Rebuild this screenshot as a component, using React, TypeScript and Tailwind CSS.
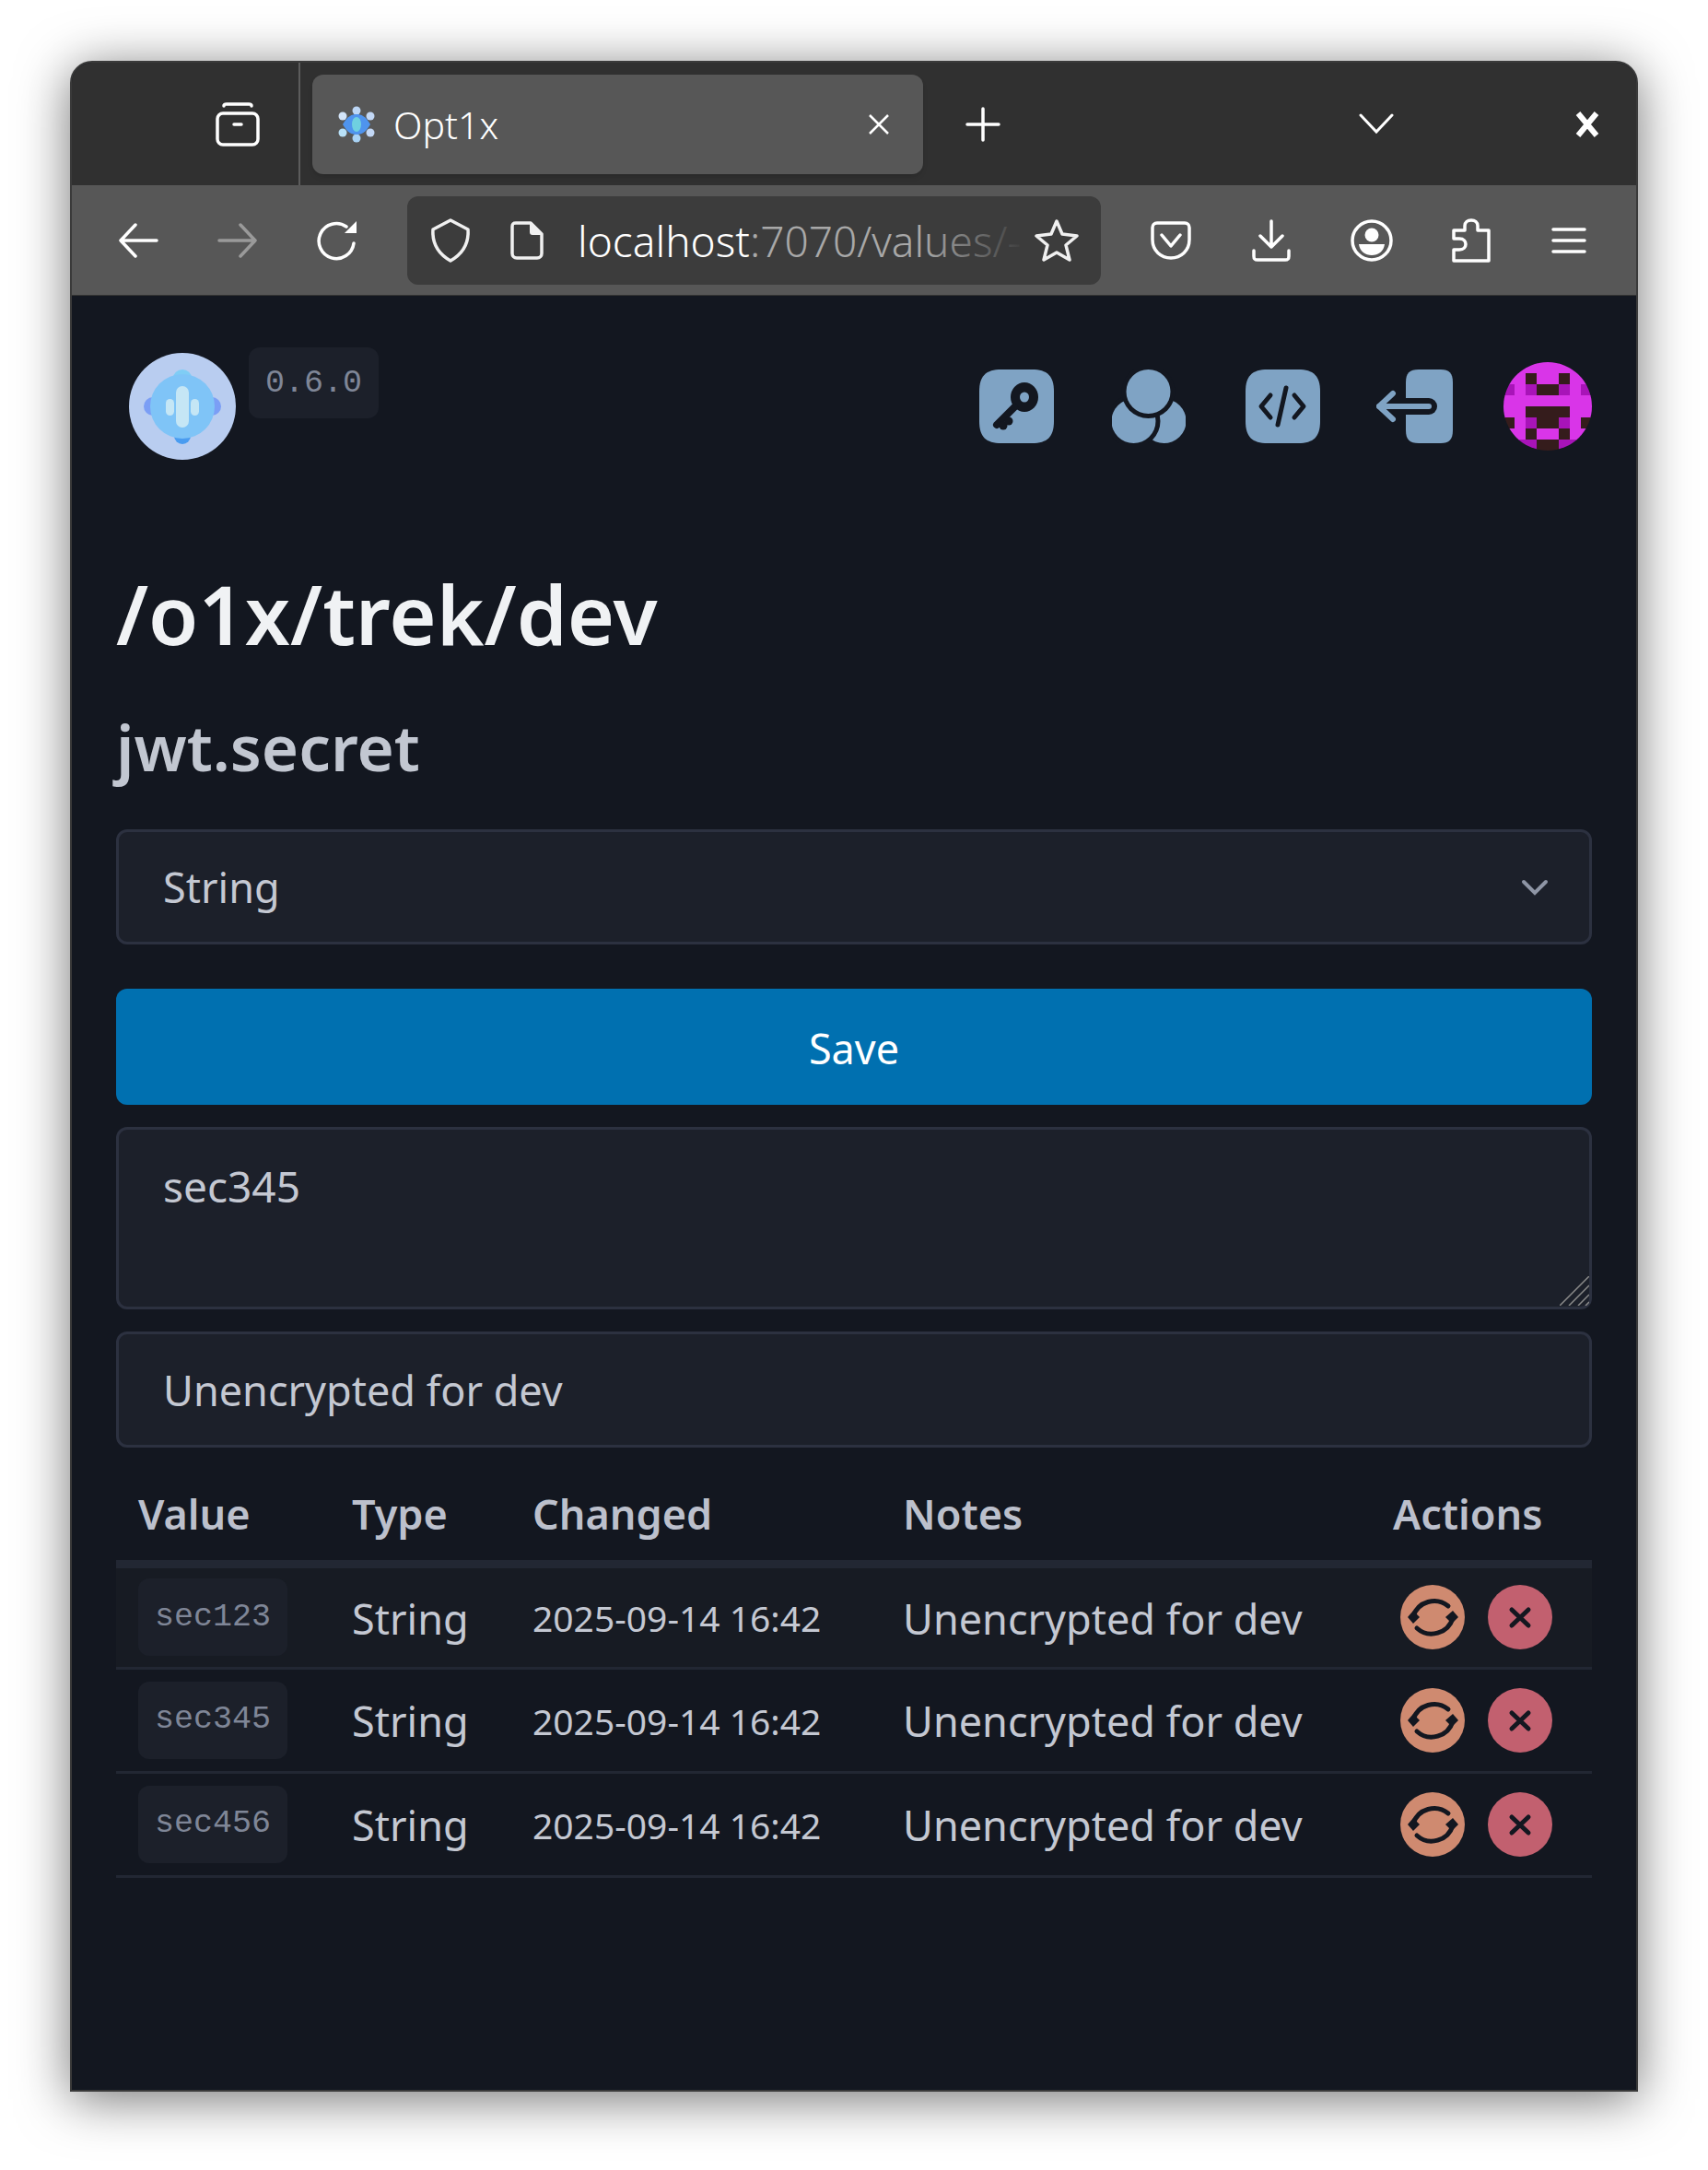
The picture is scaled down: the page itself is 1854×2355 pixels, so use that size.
import React from 'react';

const ICON_BLUE = '#7fa3c4';
const PAGE_BG = '#131720';

const SQUIRCLE = 'M24 0H57C74 0 81 7 81 24V56C81 73 74 80 57 80H24C7 80 0 73 0 56V24C0 7 7 0 24 0Z';

const AVATAR_ROWS = [
  'MMMMMMMM',
  'MMDMMDMM',
  'PMPDDPMP',
  'MMMMMMMM',
  'MMDDDDMM',
  'DMPDDPMD',
  'MMDMMDMM',
  'MPPDDPPM',
];

const AVATAR_COLORS: Record<string, string> = { M: '#d935e8', P: '#a814b8', D: '#351c1c' };

const VALUES = ['sec123', 'sec345', 'sec456'];

const TabIcon: React.FC<{ w: number; children: React.ReactNode }> = ({ w, children }) => (
  <div className="flex items-center justify-center shrink-0" style={{ width: w }}>
    {children}
  </div>
);

const Favicon = () => (
  <svg width="42" height="40" viewBox="0 0 42 40">
    <circle cx="21" cy="5" r="4.5" fill="#bcd6f5" />
    <circle cx="21" cy="35" r="4.5" fill="#a9d3f5" />
    <circle cx="6" cy="11" r="4.5" fill="#d3e4f8" />
    <circle cx="36" cy="11" r="4.5" fill="#c3d8f6" />
    <circle cx="6" cy="29" r="4.5" fill="#b8e0f7" />
    <circle cx="36" cy="29" r="4.5" fill="#c3d8f6" />
    <path d="M6 20C11 11 16 9 21 9S31 11 36 20C31 29 26 31 21 31S11 29 6 20Z" fill="#4f94ee" />
    <ellipse cx="21" cy="20" rx="5" ry="8" fill="#6fd0e0" />
  </svg>
);

const Logo = () => (
  <svg width="116" height="116" viewBox="0 0 116 116" className="shrink-0">
    <circle cx="58" cy="58" r="58" fill="#b9cdf0" />
    <ellipse cx="58" cy="27" rx="10" ry="9" fill="#7fcdf5" />
    <ellipse cx="58" cy="90" rx="9" ry="9" fill="#4a9cf0" />
    <ellipse cx="26" cy="58" rx="10" ry="10" fill="#7b9ef5" />
    <ellipse cx="90" cy="58" rx="10" ry="10" fill="#7b9ef5" />
    <circle cx="58" cy="58" r="35" fill="#7fc4f7" />
    <rect x="51" y="36" width="14" height="45" rx="7" fill="#c5e6f5" />
    <rect x="40" y="50" width="9" height="18" rx="4.5" fill="#c5e6f5" />
    <rect x="67" y="50" width="9" height="18" rx="4.5" fill="#c5e6f5" />
  </svg>
);

const KeyIcon = () => (
  <svg width="81" height="80" viewBox="0 0 81 80">
    <path d={SQUIRCLE} fill={ICON_BLUE} />
    <ellipse cx="49" cy="30" rx="15" ry="16" fill={PAGE_BG} />
    <ellipse cx="49" cy="30" rx="5" ry="5.5" fill={ICON_BLUE} />
    <path d="M38 41L19 60" stroke={PAGE_BG} strokeWidth="8" strokeLinecap="round" />
    <circle cx="26" cy="61" r="4.5" fill={PAGE_BG} />
    <circle cx="32" cy="56" r="4.5" fill={PAGE_BG} />
  </svg>
);

const GroupIcon = () => (
  <svg width="80" height="80" viewBox="0 0 80 80">
    <circle cx="56.5" cy="56" r="24" fill={ICON_BLUE} />
    <circle cx="23.5" cy="56" r="29" fill={PAGE_BG} />
    <circle cx="23.5" cy="56" r="24" fill={ICON_BLUE} />
    <circle cx="39.5" cy="24" r="29" fill={PAGE_BG} />
    <circle cx="39.5" cy="24" r="24" fill={ICON_BLUE} />
  </svg>
);

const CodeIcon = () => (
  <svg width="81" height="80" viewBox="0 0 81 80">
    <path d={SQUIRCLE} fill={ICON_BLUE} />
    <g stroke={PAGE_BG} strokeWidth="5" strokeLinecap="round" strokeLinejoin="round" fill="none">
      <path d="M27 28L17 40L27 52" />
      <path d="M44 20L35 60" />
      <path d="M53 28L63 40L53 52" />
    </g>
  </svg>
);

const ExitIcon = () => (
  <svg width="84" height="80" viewBox="0 0 84 80">
    <path d="M46 0H70C79 0 83 4 83 14V66C83 76 79 80 70 80H46C36 80 32 76 32 66V14C32 4 36 0 46 0Z" fill={ICON_BLUE} />
    <path d="M20 40H57" stroke={PAGE_BG} strokeWidth="18" strokeLinecap="round" />
    <g stroke={ICON_BLUE} strokeWidth="6" strokeLinecap="round" strokeLinejoin="round" fill="none">
      <path d="M3 40H57" />
      <path d="M18 26L3 40L18 54" />
    </g>
  </svg>
);

const Avatar = () => (
  <svg width="96" height="96" viewBox="0 0 96 96" className="rounded-full shrink-0">
    {AVATAR_ROWS.map((row, y) =>
      row.split('').map((c, x) => (
        <rect key={`${x}-${y}`} x={x * 12} y={y * 12} width="12.5" height="12.5" fill={AVATAR_COLORS[c]} />
      ))
    )}
  </svg>
);

const RefreshButton = () => (
  <button className="w-[70px] h-[70px] rounded-full bg-[#cf8a70] shrink-0">
    <svg width="70" height="70" viewBox="0 0 70 70" className="block">
      <g stroke={PAGE_BG} strokeWidth="5" strokeLinecap="round" fill="none">
        <path d="M52 23A24 24 0 0 0 14 34" />
        <path d="M18 47A24 24 0 0 0 57 36" />
      </g>
      <path d="M8 35L14 28L21 35L14 42Z" fill={PAGE_BG} />
      <path d="M49 35L57 28L63 35L56 42Z" fill={PAGE_BG} />
    </svg>
  </button>
);

const DeleteButton = () => (
  <button className="w-[70px] h-[70px] rounded-full bg-[#c2606f] shrink-0">
    <svg width="70" height="70" viewBox="0 0 70 70" className="block">
      <path d="M26 27L44 44M44 27L26 44" stroke={PAGE_BG} strokeWidth="5" strokeLinecap="round" />
    </svg>
  </button>
);

export default function App() {
  return (
    <div className="w-full h-[2355px] bg-white pt-[66px] pl-[76px] font-['Noto_Sans',sans-serif] overflow-hidden">
      <div className="w-[1702px] h-[2204px] flex flex-col rounded-t-[24px] border-2 border-[#3a3a3a] bg-[#131720] shadow-[0_8px_56px_rgba(0,0,0,0.55)] overflow-hidden">
        {/* tab bar */}
        <div className="h-[133px] bg-[#303030] flex items-stretch shrink-0 text-white">
          <div className="w-[248px] flex items-center justify-end pr-[42px] border-r-2 border-[#5c5c5c] shrink-0">
            <svg width="48" height="48" viewBox="0 0 48 48" fill="none" stroke="#fff" strokeWidth="3.5" strokeLinecap="round">
              <rect x="2" y="12" width="44" height="34" rx="6" />
              <path d="M9 4C9 2 10 2 12 2H36C38 2 39 2 39 4" />
              <path d="M20 24H28" />
            </svg>
          </div>
          <div className="ml-[13px] mt-[13px] w-[663px] h-[108px] rounded-[12px] bg-[#575757] shadow-md flex items-center pl-[27px] pr-[35px] shrink-0">
            <Favicon />
            <span className="ml-[19px] text-[41px] font-light leading-none flex-1">Opt1x</span>
            <svg width="26" height="26" viewBox="0 0 26 26" stroke="#fff" strokeWidth="2.5">
              <path d="M3 3L23 23M23 3L3 23" />
            </svg>
          </div>
          <div className="ml-[46px] flex items-center">
            <svg width="38" height="38" viewBox="0 0 38 38" stroke="#fff" strokeWidth="3.5" strokeLinecap="round">
              <path d="M19 2V36M2 19H36" />
            </svg>
          </div>
          <div className="ml-[389px] flex items-center pb-[2px]">
            <svg width="38" height="24" viewBox="0 0 38 24" stroke="#fff" strokeWidth="3" fill="none" strokeLinecap="round">
              <path d="M2 3L19 21L36 3" />
            </svg>
          </div>
          <div className="ml-[197px] flex items-center">
            <svg width="26" height="28" viewBox="0 0 26 28" stroke="#fff" strokeWidth="6">
              <path d="M3 2L23 26M23 2L3 26" />
            </svg>
          </div>
        </div>

        {/* nav bar */}
        <div className="h-[120px] bg-[#575757] flex items-center shrink-0 border-b border-[#333] text-white">
          <div className="ml-[18px] flex items-center">
            <TabIcon w={108}>
              <svg width="44" height="38" viewBox="0 0 44 38" fill="none" stroke="#fff" strokeWidth="3.5" strokeLinecap="round" strokeLinejoin="round">
                <path d="M42 19H3M19 2L3 19L19 36" />
              </svg>
            </TabIcon>
            <TabIcon w={108}>
              <svg width="44" height="38" viewBox="0 0 44 38" fill="none" stroke="#9a9a9a" strokeWidth="3.5" strokeLinecap="round" strokeLinejoin="round">
                <path d="M2 19H41M25 2L41 19L25 36" />
              </svg>
            </TabIcon>
            <TabIcon w={108}>
              <svg width="46" height="44" viewBox="0 0 46 44" fill="none" stroke="#fff" strokeWidth="3.5" strokeLinecap="round">
                <path d="M41 25A19 19 0 1 1 33 7" />
                <path d="M44 1V14H31Z" fill="#fff" stroke="none" />
              </svg>
            </TabIcon>
          </div>
          <div className="ml-[22px] w-[753px] h-[96px] rounded-[12px] bg-[#3c3c3c] flex items-center shrink-0 relative overflow-hidden">
            <div className="ml-[25px] shrink-0">
              <svg width="44" height="48" viewBox="0 0 44 48" fill="none" stroke="#f0f0f0" strokeWidth="3.5" strokeLinejoin="round">
                <path d="M22 2L41 12C42 26 36 38 22 46C8 38 2 26 3 12Z" />
              </svg>
            </div>
            <div className="ml-[43px] shrink-0">
              <svg width="36" height="42" viewBox="0 0 36 42" fill="none" stroke="#f0f0f0" strokeWidth="3.5" strokeLinejoin="round">
                <path d="M6 2H22L34 14V35C34 38 32 40 29 40H7C4 40 2 38 2 35V6C2 3 3 2 6 2Z" />
                <path d="M21 2H22L34 14V15H24C22 15 21 14 21 12Z" fill="#f0f0f0" stroke="none" />
              </svg>
            </div>
            <div className="ml-[37px] text-[46px] font-light leading-none whitespace-nowrap">
              <span className="text-white">localhost</span>
              <span className="text-[#a8a8a8]">:7070/values/-</span>
            </div>
            <div className="absolute left-[560px] top-0 w-[110px] h-full bg-gradient-to-r from-transparent to-[#3c3c3c]" />
            <div className="absolute left-[680px]">
              <svg width="50" height="48" viewBox="0 0 50 48" fill="none" stroke="#f0f0f0" strokeWidth="3.5" strokeLinejoin="round">
                <path d="M25 3L31 17L47 19L35 29L39 45L25 37L11 45L15 29L3 19L19 17Z" />
              </svg>
            </div>
          </div>
          <div className="ml-[22px] flex items-center">
            <TabIcon w={108}>
              <svg width="44" height="42" viewBox="0 0 44 42" fill="none" stroke="#fff" strokeWidth="3.5" strokeLinecap="round" strokeLinejoin="round">
                <path d="M7 2H37C40 2 42 4 42 7V20C42 32 33 40 22 40S2 32 2 20V7C2 4 4 2 7 2Z" />
                <path d="M12 15L22 27L32 15" />
              </svg>
            </TabIcon>
            <TabIcon w={109}>
              <svg width="42" height="46" viewBox="0 0 42 46" fill="none" stroke="#fff" strokeWidth="3.5" strokeLinecap="round" strokeLinejoin="round">
                <path d="M21 2V30M9 18L21 30L33 18" />
                <path d="M2 34V40C2 43 3 44 6 44H36C39 44 40 43 40 40V34" />
              </svg>
            </TabIcon>
            <TabIcon w={109}>
              <svg width="46" height="46" viewBox="0 0 46 46" fill="none">
                <circle cx="23" cy="23" r="21" stroke="#fff" strokeWidth="3.5" />
                <circle cx="23" cy="17" r="7.5" fill="#fff" />
                <path d="M9 27H37C36 35 30 39 23 39S10 35 9 27Z" fill="#fff" />
              </svg>
            </TabIcon>
            <TabIcon w={107}>
              <svg width="42" height="48" viewBox="0 0 42 48" fill="none" stroke="#fff" strokeWidth="3.5" strokeLinejoin="round">
                <path d="M2 46V34H8C13 34 15 31 15 28S13 22 8 22H2V13H14V8C14 4 17 2 21 2S28 4 28 8V13H40V46Z" />
              </svg>
            </TabIcon>
            <TabIcon w={105}>
              <svg width="38" height="30" viewBox="0 0 38 30" stroke="#fff" strokeWidth="3.5" strokeLinecap="round">
                <path d="M2 3H36M2 15H36M2 27H36" />
              </svg>
            </TabIcon>
          </div>
        </div>

        {/* page */}
        <div className="flex-1 px-[48px] pt-[57px]">
          <div className="flex items-center h-[126px] pl-[14px]">
            <Logo />
            <div className="ml-[14px] self-start mt-[-1px] w-[141px] h-[77px] rounded-[12px] bg-[#1c202a] flex items-center justify-center font-['Liberation_Mono',monospace] text-[35px] text-[#7f8697]">
              <span className="pt-[2px]">0.6.0</span>
            </div>
            <div className="flex-1" />
            <KeyIcon />
            <div className="ml-[63px]"><GroupIcon /></div>
            <div className="ml-[65px]"><CodeIcon /></div>
            <div className="ml-[61px]"><ExitIcon /></div>
            <div className="ml-[54px]"><Avatar /></div>
          </div>

          <h1 className="mt-[102px] text-[88px] leading-[120px] font-semibold text-[#f0f2f4]">/o1x/trek/dev</h1>
          <h2 className="mt-[36px] text-[69px] leading-[96px] font-semibold text-[#c2c7d1]">jwt.secret</h2>

          <div className="relative mt-[42px]">
            <select className="block w-full h-[125px] appearance-none rounded-[12px] border-[3px] border-[#2c3140] bg-[#1c202a] pl-[48px] text-[45px] text-[#c4c8d2] outline-none">
              <option>String</option>
            </select>
            <svg width="30" height="18" viewBox="0 0 30 18" fill="none" stroke="#8e95a5" strokeWidth="4" strokeLinecap="round" className="absolute right-[47px] top-[54px]">
              <path d="M3 3L15 15L27 3" />
            </svg>
          </div>

          <button className="mt-[48px] block w-full h-[126px] rounded-[12px] bg-[#0070b0] pt-[3px] text-[45px] text-white">Save</button>

          <div className="relative mt-[24px]">
            <textarea
              defaultValue="sec345"
              className="block w-full h-[198px] rounded-[12px] border-[3px] border-[#2c3140] bg-[#1c202a] px-[48px] pt-[31px] text-[46px] leading-[60px] text-[#c4c8d2] outline-none resize-none"
            />
            <svg width="32" height="32" viewBox="0 0 32 32" stroke="#8a8a8a" strokeWidth="1.5" className="absolute right-[3px] bottom-[4px]">
              <path d="M0 32L32 0M10 32L32 10M20 32L32 20M28 32L32 28" />
            </svg>
          </div>

          <input
            defaultValue="Unencrypted for dev"
            className="mt-[24px] block w-full h-[126px] rounded-[12px] border-[3px] border-[#2c3140] bg-[#1c202a] px-[48px] text-[45px] text-[#c4c8d2] outline-none"
          />

          <table className="mt-[25px] w-full table-fixed border-collapse">
            <thead>
              <tr className="h-[101px] border-b-[9px] border-[#222733] text-left text-[45px] text-[#bcc0cc]">
                <th className="w-[256px] pl-[24px] pb-[4px] font-semibold">Value</th>
                <th className="w-[196px] pl-0 pb-[4px] font-semibold">Type</th>
                <th className="w-[402px] pb-[4px] font-semibold">Changed</th>
                <th className="w-[532px] pb-[4px] font-semibold">Notes</th>
                <th className="pb-[4px] font-semibold">Actions</th>
              </tr>
            </thead>
            <tbody>
              {VALUES.map((v, i) => (
                <tr key={v} className={`h-[113px] border-b-[3px] border-[#222733] text-[#c4c8d2] ${i === 0 ? 'bg-[#171b23]' : ''}`}>
                  <td className="pl-[24px]">
                    <span className="flex items-center justify-center w-[162px] h-[84px] rounded-[12px] bg-[#1c202a] font-['Liberation_Mono',monospace] text-[35px] text-[#7f8697]">
                      {v}
                    </span>
                  </td>
                  <td className="text-[45px] pt-[3px]">String</td>
                  <td className="text-[39px] pt-[3px]">2025-09-14 16:42</td>
                  <td className="text-[45px] pt-[3px]">Unencrypted for dev</td>
                  <td>
                    <div className="flex items-center gap-[25px] pl-[8px]">
                      <RefreshButton />
                      <DeleteButton />
                    </div>
                  </td>
                </tr>
              ))}
            </tbody>
          </table>
        </div>
      </div>
    </div>
  );
}
